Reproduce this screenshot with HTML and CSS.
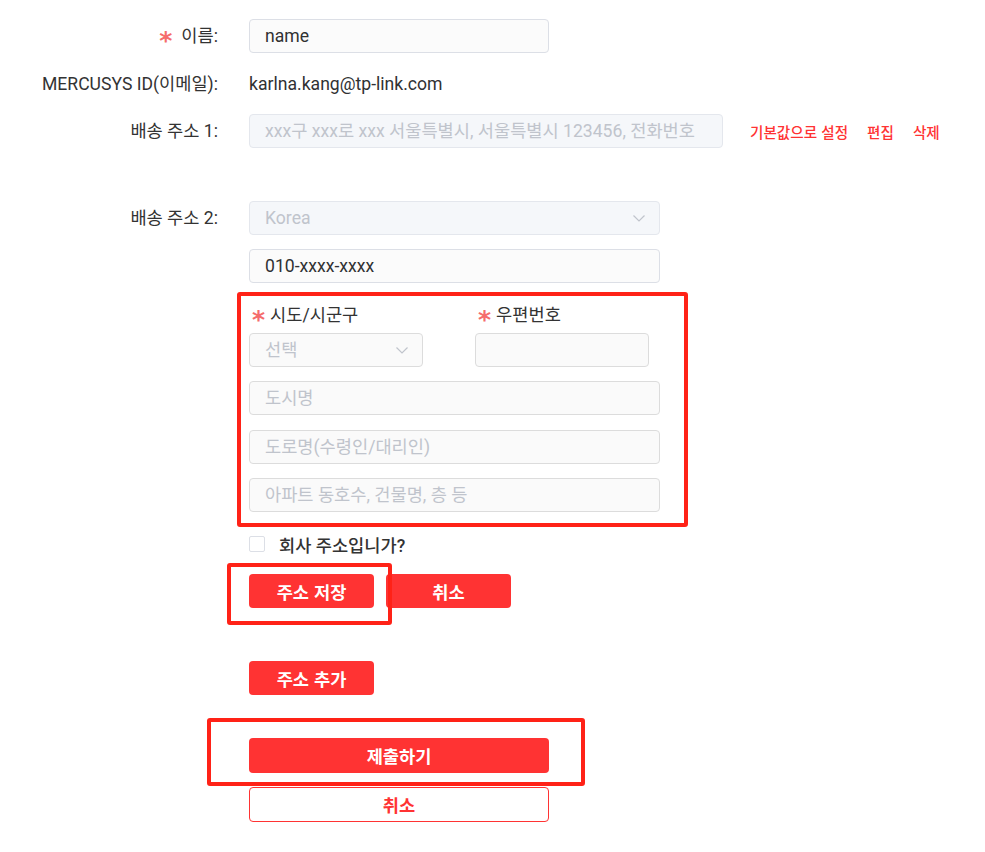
FILE: index.html
```html
<!DOCTYPE html>
<html lang="ko">
<head>
<meta charset="utf-8">
<title>배송 정보</title>
<link rel="stylesheet" href="styles.css">
</head>
<body>
<form class="form">
  <div class="row row-name">
    <label class="label"><span class="req">*</span>이름:</label>
    <div class="field">
      <div class="input w300">name</div>
    </div>
  </div>

  <div class="row row-id">
    <label class="label">MERCUSYS ID(이메일):</label>
    <div class="field"><span class="value">karlna.kang@tp-link.com</span></div>
  </div>

  <div class="row row-addr1">
    <label class="label">배송 주소 1:</label>
    <div class="field addr1">
      <div class="input disabled w474 placeholder">xxx구 xxx로 xxx 서울특별시, 서울특별시 123456, 전화번호</div>
      <div class="links">
        <a class="link">기본값으로 설정</a>
        <a class="link">편집</a>
        <a class="link">삭제</a>
      </div>
    </div>
  </div>

  <div class="row row-addr2">
    <label class="label label-top">배송 주소 2:</label>
    <div class="field stack">
      <div class="input disabled select w411 placeholder">Korea
        <svg class="chev" width="12" height="7" viewBox="0 0 12 7"><polyline points="0.5,0.5 6,6 11.5,0.5" fill="none" stroke="#c0c4cc" stroke-width="1.2"/></svg>
      </div>
      <div class="input w411 mt14">010-xxxx-xxxx</div>

      <div class="region annotated">
        <div class="region-grid">
          <div class="col">
            <div class="sublabel"><span class="req">*</span>시도/시군구</div>
            <div class="input soft select w174 placeholder">선택
              <svg class="chev" width="12" height="7" viewBox="0 0 12 7"><polyline points="0.5,0.5 6,6 11.5,0.5" fill="none" stroke="#c0c4cc" stroke-width="1.2"/></svg>
            </div>
          </div>
          <div class="col">
            <div class="sublabel"><span class="req">*</span>우편번호</div>
            <div class="input soft w174"></div>
          </div>
        </div>
        <div class="input soft w411 placeholder mt14">도시명</div>
        <div class="input soft w411 placeholder mt15">도로명(수령인/대리인)</div>
        <div class="input soft w411 placeholder mt14">아파트 동호수, 건물명, 층 등</div>
        <span class="mark mark-region"></span>
      </div>

      <label class="check">
        <span class="box"></span>
        <span class="check-text">회사 주소입니가?</span>
      </label>

      <div class="btn-row">
        <div class="annotated">
          <button type="button" class="btn">주소 저장</button>
          <span class="mark mark-save"></span>
        </div>
        <button type="button" class="btn">취소</button>
      </div>

      <button type="button" class="btn add">주소 추가</button>

      <div class="annotated submit-wrap">
        <button type="button" class="btn wide">제출하기</button>
        <span class="mark mark-submit"></span>
      </div>
      <button type="button" class="btn wide outline">취소</button>
    </div>
  </div>
</form>
</body>
</html>
```

FILE: styles.css
```css
* { box-sizing: border-box; }

html, body {
  margin: 0;
  padding: 0;
  background: #ffffff;
}

body {
  font-family: Roboto, "Noto Sans CJK KR", "Noto Sans", sans-serif;
  font-size: 17.6px;
  color: #303133;
}

.form {
  padding-top: 19px;
}

.row {
  display: grid;
  grid-template-columns: 218px 1fr;
  column-gap: 31px;
  align-items: center;
}

.row-name { margin-bottom: 14px; }
.row-id { margin-bottom: 13px; height: 34px; }
.row-addr1 { margin-bottom: 53px; }
.row-addr2 { align-items: start; }

.label {
  text-align: right;
  line-height: 34px;
  color: #333333;
  white-space: nowrap;
}

.req {
  display: inline-block;
  color: #f56c6c;
  margin-right: 9px;
  font-family: "DejaVu Sans", sans-serif;
  font-size: 25px;
  font-weight: 700;
  line-height: 20px;
  height: 20px;
  vertical-align: -7px;
}

.value {
  line-height: 34px;
  color: #303133;
}

.field { display: flex; align-items: center; }
.stack { flex-direction: column; align-items: flex-start; }

.input {
  height: 34px;
  line-height: 32px;
  border: 1px solid #dcdfe6;
  border-radius: 4px;
  background: #fbfbfb;
  padding: 0 15px;
  color: #303133;
  white-space: nowrap;
  overflow: hidden;
}

.input.disabled {
  background: #f5f7fa;
  border-color: #e4e7ed;
}

.input.soft {
  background: #fafafa;
  border-color: #dcdcdc;
}

.placeholder { color: #c0c4cc; }

.select { display: flex; align-items: center; justify-content: space-between; }
.chev { flex: none; margin-right: -1px; }

.w300 { width: 300px; }
.w474 { width: 474px; }
.w411 { width: 411px; }
.w174 { width: 174px; }

.mt14 { margin-top: 14px; }
.mt15 { margin-top: 15px; }

.links {
  display: flex;
  gap: 19px;
  margin-left: 27px;
}

.link {
  color: #ff3333;
  font-size: 14.6px;
  font-weight: 500;
  font-family: "Noto Sans CJK KR", sans-serif;
  cursor: pointer;
}

.region {
  margin-top: 21px;
  display: flex;
  flex-direction: column;
}

.region-grid {
  display: grid;
  grid-template-columns: 174px 174px;
  column-gap: 52px;
}

.sublabel {
  line-height: 22px;
  height: 22px;
  margin-bottom: 7px;
  padding-left: 3px;
  color: #333333;
  white-space: nowrap;
}

.sublabel .req { margin-right: 5px; }

.annotated { position: relative; }

.mark {
  position: absolute;
  border: 4px solid #ff2217;
  border-radius: 3px;
  pointer-events: none;
}

.mark-region { top: -12px; left: -12px; right: -28px; bottom: -15px; }
.mark-save { top: -11px; left: -22px; right: -18px; bottom: -17px; }
.mark-submit { top: -20px; left: -42px; right: -36px; bottom: -13px; }

.check {
  display: flex;
  align-items: center;
  margin-top: 21px;
  height: 22px;
}

.box {
  width: 16px;
  height: 16px;
  border: 1px solid #dcdfe6;
  border-radius: 2px;
  background: #ffffff;
}

.check-text {
  margin-left: 14px;
  color: #333333;
  font-weight: 500;
}

.btn-row {
  display: flex;
  gap: 12px;
  margin-top: 19px;
}

.btn {
  width: 125px;
  height: 34px;
  border: 0;
  border-radius: 4px;
  background: #ff3333;
  color: #ffffff;
  font-family: "Noto Sans CJK KR", Roboto, sans-serif;
  font-size: 17.6px;
  font-weight: 700;
  padding: 0;
  cursor: pointer;
}

.add { margin-top: 53px; }

.submit-wrap { margin-top: 43px; }

.wide { width: 300px; height: 35px; display: block; }

.outline {
  margin-top: 14px;
  background: #ffffff;
  color: #ff3333;
  border: 1px solid #ff3333;
}
```
